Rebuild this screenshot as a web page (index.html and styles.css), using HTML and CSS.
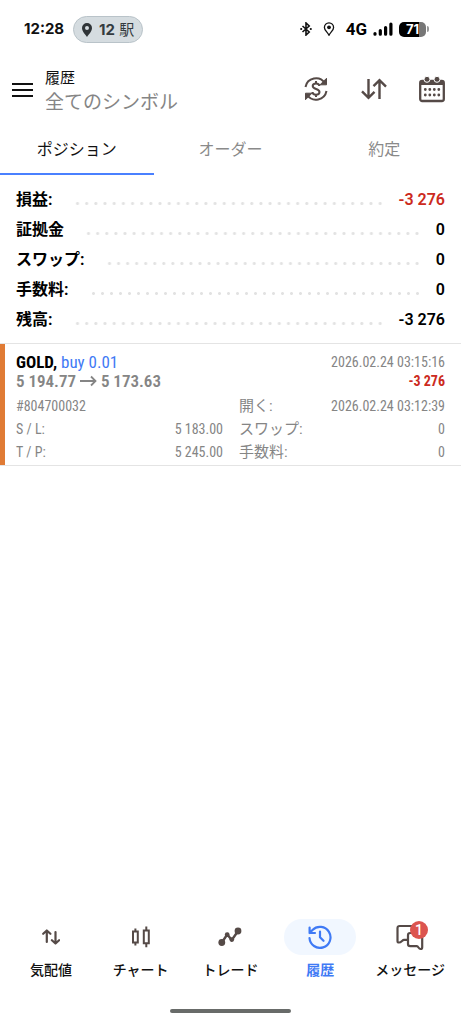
FILE: index.html
```html
<!DOCTYPE html>
<html lang="ja">
<head>
<meta charset="utf-8">
<meta name="viewport" content="width=device-width, initial-scale=1">
<title>履歴</title>
<link rel="stylesheet" href="styles.css">
</head>
<body>
<div class="status">
  <span class="clock">12:28</span>
  <span class="station">
    <svg width="10" height="14" viewBox="0 0 10 14"><path fill="#2f3437" fill-rule="evenodd" d="M5 0a5 5 0 0 1 5 5c0 3.500-3.500 6.500-5 9C3.500 11.500 0 8.500 0 5a5 5 0 0 1 5-5zm0 3a2 2 0 1 0 0 4 2 2 0 0 0 0-4z"/></svg>
    <span><b>12</b> 駅</span>
  </span>
  <span class="signals">
    <svg width="12" height="14" viewBox="0 0 12 14" fill="none" stroke="#111" stroke-width="1.600"><path d="M2.500 4l6.700 6L6 13V1l3.200 3-6.700 6"/><path stroke-width="2.200" stroke-linecap="round" d="M1.200 7h.01M10.800 7h.01"/></svg>
    <svg class="pin" width="12" height="14" viewBox="0 0 12 14"><path fill="none" stroke="#111" stroke-width="1.300" d="M6 .8a4.600 4.600 0 0 1 4.600 4.600C10.600 8.500 7.500 10 6 13.200 4.500 10 1.400 8.500 1.400 5.400A4.600 4.600 0 0 1 6 .8z"/><circle cx="6" cy="5.300" r="1.900" fill="#111"/></svg>
    <span class="network">4G</span>
    <svg class="bars" width="20" height="14" viewBox="0 0 20 14" stroke="#000" stroke-width="3.200" stroke-linecap="round"><path d="M2 11.500v.7M7.300 8.500v3.700M12.600 5.500v6.700M17.900 2v10.200"/></svg>
    <span class="battery">71</span><span class="battery-tip"></span>
  </span>
</div>

<header class="header">
  <button class="menu" aria-label="メニュー"><svg width="22" height="16" viewBox="0 0 22 16" stroke="#111" stroke-width="2"><path d="M0 2h21M0 8h21M0 14h21"/></svg></button>
  <div class="titles">
    <h1>履歴</h1>
    <p>全てのシンボル</p>
  </div>
  <button class="tool" aria-label="通貨"><svg width="26" height="26" viewBox="0 0 26 26" fill="none" stroke="#554a47" stroke-width="2"><path d="M2.500 11A10.700 10.700 0 0 1 21.800 7M23.500 15A10.700 10.700 0 0 1 4.200 19"/><path d="M17 8.800h6.500V2.300zM9 17.200H2.500v6.500z" fill="#554a47" stroke-width="1"/><path d="M16.300 10c0-1.600-1.300-2.600-3.300-2.600S9.700 8.400 9.700 10c0 3.700 6.800 2.300 6.800 6 0 1.700-1.400 2.700-3.500 2.700S9.500 17.700 9.500 16M13 5v2.400M13 18.700V21"/></svg></button>
  <button class="tool" aria-label="並べ替え"><svg width="26" height="22" viewBox="0 0 26 22" fill="none" stroke="#554a47" stroke-width="2.400"><path d="M7.500 1v18.500M1 13.300l6.500 6.500 6-6M18.500 21V2.500M12.500 8.200l6-6L25 8.700"/></svg></button>
  <button class="tool" aria-label="期間"><svg width="26" height="27" viewBox="0 0 26 27"><rect x="1.200" y="5" width="23.600" height="20" rx="2" fill="none" stroke="#554a47" stroke-width="2.300"/><path fill="#554a47" d="M1 5h24v4H1z"/><g fill="#554a47" stroke="#fff"><circle cx="8" cy="3.300" r="3"/><circle cx="18" cy="3.300" r="3"/></g><path stroke="#554a47" stroke-width="2.800" stroke-linecap="round" d="M6.300 13.500h.01M10.800 13.500h.01M15.300 13.500h.01M19.800 13.500h.01M6.300 19h.01M10.800 19h.01M15.300 19h.01M19.800 19h.01"/></svg></button>
</header>

<nav class="tabs">
  <button class="tab active">ポジション</button>
  <button class="tab">オーダー</button>
  <button class="tab">約定</button>
</nav>

<main>
  <dl class="summary">
    <div class="total"><dt>損益:</dt><dd class="loss">-3 276</dd></div>
    <div class="total"><dt>証拠金</dt><dd>0</dd></div>
    <div class="total"><dt>スワップ:</dt><dd>0</dd></div>
    <div class="total"><dt>手数料:</dt><dd>0</dd></div>
    <div class="total"><dt>残高:</dt><dd>-3 276</dd></div>
  </dl>

  <article class="deal">
    <div class="deal-line"><span class="symbol"><b>GOLD,</b> <span class="side">buy 0.01</span></span><time>2026.02.24 03:15:16</time></div>
    <div class="deal-line"><span class="price">5 194.77 <svg width="17" height="12" viewBox="0 0 17 12" fill="none" stroke="#858585" stroke-width="1.800"><path d="M0 6h15.500M11 1.500L15.500 6 11 10.500"/></svg> 5 173.63</span><b class="loss">-3 276</b></div>
    <div class="details">
      <div class="pair"><span>#804700032</span></div>
      <div class="pair"><span class="label">開く:</span><time>2026.02.24 03:12:39</time></div>
      <div class="pair"><span>S / L:</span><span>5 183.00</span></div>
      <div class="pair"><span class="label">スワップ:</span><span>0</span></div>
      <div class="pair"><span>T / P:</span><span>5 245.00</span></div>
      <div class="pair"><span class="label">手数料:</span><span>0</span></div>
    </div>
  </article>
</main>

<nav class="bottom">
  <a class="item" href="#quotes"><span class="icon"><svg width="18" height="16" viewBox="0 0 18 16" fill="none" stroke="#554a47" stroke-width="2.200" stroke-linecap="round" stroke-linejoin="round"><path d="M4.800 13V1.500M1.200 4.800l3.600-3.300 3.600 3.300M13.500 3v11.500M9.900 11.200l3.600 3.300 3.600-3.300"/></svg></span>気配値</a>
  <a class="item" href="#chart"><span class="icon"><svg width="18" height="22" viewBox="0 0 18 22" fill="none" stroke="#554a47" stroke-width="2"><path d="M1 5.500h4.800v11H1zM3.400 2.500v3M3.400 16.500v3M11.800 4.500h5v12.800h-5zM14.300.5v4M14.300 17.300v4"/></svg></span>チャート</a>
  <a class="item" href="#trade"><span class="icon"><svg width="24" height="20" viewBox="0 0 24 20"><path d="M3.800 15.500l5.400-8 4.600 5.500 5.900-8.500" fill="none" stroke="#554a47" stroke-width="2.400"/><g fill="#554a47"><circle cx="3.800" cy="15.500" r="3.400"/><circle cx="9.200" cy="7.700" r="2.400"/><circle cx="13.800" cy="12.600" r="2.400"/><circle cx="20" cy="4" r="3.400"/></g></svg></span>トレード</a>
  <a class="item current" href="#history" aria-current="page"><span class="icon"><svg width="24" height="24" viewBox="0 0 24 24" fill="none" stroke="#3f7af5" stroke-width="2.200" stroke-linecap="round" stroke-linejoin="round"><path d="M1.500 13A10.500 10.500 0 1 0 4.500 5L1.600 8M1.600 2.500V8H7M12 6.500v5.800l3.500 3.500"/></svg></span>履歴</a>
  <a class="item" href="#messages"><span class="icon"><svg width="28" height="27" viewBox="0 0 28 27" fill="none" stroke="#554a47" stroke-width="2.200" stroke-linejoin="round"><path d="M11.500 15.800H8c-1.600 0-2.600 2.700-5 2.700-1 0-1.500-.6-1.500-1.600V4.200C1.500 2.700 2.300 2 3.700 2H18c1.500 0 2.200.7 2.200 2.200V9"/><path d="M14.200 9H24c1.500 0 2.200.7 2.200 2.200v12c0 1.200-.6 1.800-1.600 1.800-2.200 0-2-2.800-3.800-2.800h-6.600c-1.500 0-2.200-.7-2.200-2.200v-8.800c0-1.500.7-2.200 2.200-2.200z"/></svg><span class="badge">1</span></span>メッセージ</a>
</nav>
<div class="home"></div>
</body>
</html>
```
FILE: styles.css
```css
* { box-sizing: border-box; }
body {
  margin: 0;
  min-height: 100vh;
  display: flex;
  flex-direction: column;
  background: #fff;
  color: #111;
  font-family: Roboto, "Noto Sans CJK JP", sans-serif;
}
button {
  border: 0;
  padding: 0;
  background: none;
  font: inherit;
  color: inherit;
}
svg { flex: none; }
main { flex: 1; }

.status {
  display: flex;
  align-items: center;
  height: 58px;
  padding: 0 32px 0 24px;
}
.clock {
  width: 49px;
  font: 700 15px/20px Inter, sans-serif;
  white-space: nowrap;
}
.station {
  display: flex;
  align-items: center;
  gap: 7px;
  height: 27px;
  padding: 2px 8px 0;
  border: 1px solid #b9c3c9;
  border-radius: 14px;
  background: #d5dce0;
  color: #343b3f;
  font-family: Inter, "Noto Sans CJK JP", sans-serif;
  font-size: 15px;
  line-height: 20px;
  white-space: nowrap;
}
.signals {
  display: flex;
  align-items: center;
  margin-left: auto;
}
.pin { margin: 0 11px; }
.network {
  color: #000;
  font: 700 17px/20px Roboto, sans-serif;
}
.bars { margin: 0 6px; }
.battery {
  width: 27px;
  height: 15px;
  border-radius: 5px;
  background: linear-gradient(90deg, #000 74%, #777 74%);
  color: #fff;
  font: 700 13px/15px Inter, sans-serif;
  text-align: center;
}
.battery-tip {
  width: 2px;
  height: 6px;
  margin-left: 1px;
  border-radius: 0 2px 2px 0;
  background: #999;
}

.header {
  display: flex;
  align-items: center;
  height: 64px;
}
.menu {
  display: grid;
  place-items: center;
  width: 45px;
  height: 48px;
}
.titles {
  flex: 1;
  padding-top: 2px;
  white-space: nowrap;
}
.titles h1 {
  margin: 0;
  font-size: 15px;
  font-weight: 400;
  line-height: 22px;
}
.titles p {
  margin: 0;
  color: #858585;
  font-size: 19px;
  line-height: 27px;
}
.tool {
  display: grid;
  place-items: center;
  width: 58px;
  height: 50px;
  padding-bottom: 2px;
}

.tabs { display: flex; height: 53px; }
.tab {
  flex: 1;
  border-bottom: 2px solid transparent;
  color: #8a8a8a;
  font-size: 16px;
}
.tab.active { border-color: #4a80ff; color: #111; }

.summary {
  margin: 0;
  padding: 10px 16px 8px;
  border-bottom: 1px solid #e4e4e4;
  font-size: 16px;
  font-weight: 700;
  line-height: 30px;
}
.total { display: flex; color: #000; }
.total::before {
  content: "";
  order: 1;
  flex: 1;
  height: 3px;
  margin: 17px 14px 0 20px;
  background: radial-gradient(circle, #e2e2e2 1px, transparent 2px) 0 0 / 9px 3px space no-repeat;
}
.total dt { order: 0; }
.total dd { order: 2; margin: 0; font-weight: 600; }
.total .loss, .loss { color: #cc2a20; }

.deal {
  padding: 9px 16px 1px 11px;
  border-bottom: 1px solid #e4e4e4;
  box-shadow: inset 5px 0 #e07b35;
  padding-left: 16px;
  color: #858585;
  font-family: "Roboto Condensed", "Liberation Sans Narrow", Roboto, "Noto Sans CJK JP", sans-serif;
  font-size: 14px;
  line-height: 23px;
}
.deal-line {
  display: flex;
  justify-content: space-between;
  align-items: center;
  height: 19px;
  white-space: nowrap;
}
.symbol { font-size: 17px; }
.symbol b { color: #000; }
.side { color: #3f7af5; }
.price { font-size: 17px; font-weight: 600; }
.details {
  display: grid;
  grid-template-columns: minmax(0, 207fr) minmax(0, 206fr);
  column-gap: 16px;
  padding-top: 4px;
}
.pair {
  display: flex;
  justify-content: space-between;
  height: 23px;
  white-space: nowrap;
}
.label { font-size: 15px; }

.bottom { display: flex; padding: 0 6px; }
.item {
  flex: 1;
  display: flex;
  flex-direction: column;
  align-items: center;
  gap: 4px;
  color: #111;
  font-size: 14px;
  font-weight: 500;
  line-height: 22px;
  text-decoration: none;
  white-space: nowrap;
}
.icon {
  position: relative;
  display: grid;
  place-items: center;
  width: 72px;
  height: 36px;
  border-radius: 18px;
}
.current { color: #3f7af5; font-weight: 700; }
.current .icon { background: #f1f7ff; }
.badge {
  position: absolute;
  top: 2px;
  right: 18px;
  width: 18px;
  height: 18px;
  border-radius: 50%;
  background: #dc544f;
  color: #fff;
  font-size: 14px;
  line-height: 18px;
  text-align: center;
}
.home {
  width: 121px;
  height: 4px;
  margin: 28px auto 11px;
  border-radius: 2px;
  background: #686b69;
}
```
